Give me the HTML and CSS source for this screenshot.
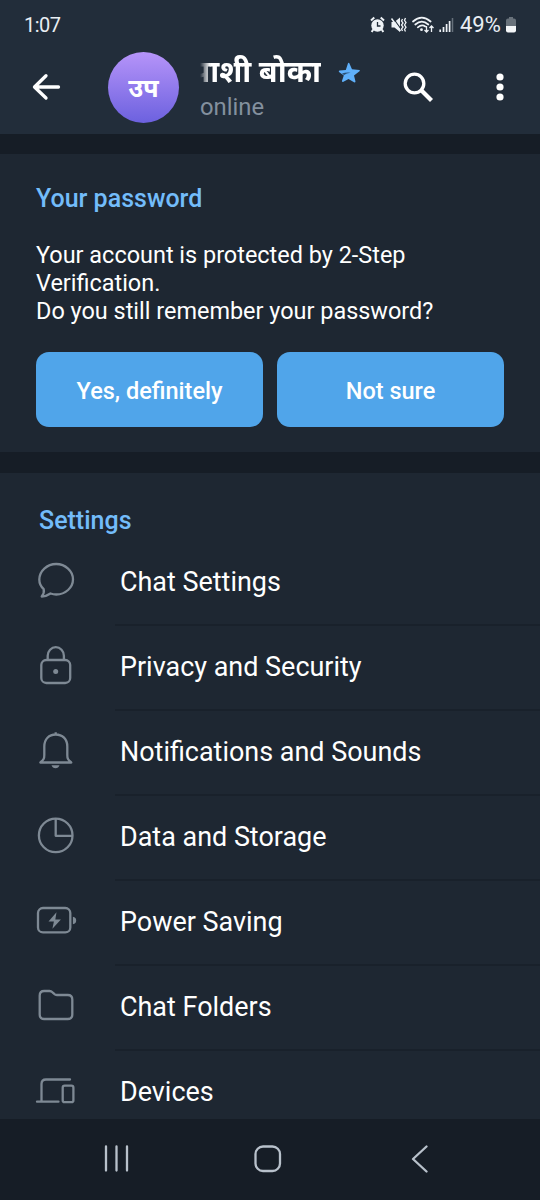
FILE: index.html
```html
<!DOCTYPE html>
<html lang="en">
<head>
<meta charset="utf-8">
<title>Settings</title>
<link rel="stylesheet" href="styles.css">
</head>
<body>
<div class="screen">
  <div class="status">
    <span class="clock">1:07</span>
    <svg class="status-icons" width="84" height="18" viewBox="370 16 84 18">
      <g fill="none" stroke="#eef2f6">
        <circle cx="377.500" cy="25.500" r="6.200" fill="#eef2f6" stroke="none"/>
        <path d="M371 20.5l3.3-3M384 20.5l-3.3-3M373.2 29.5l-1.500 2.500M381.8 29.5l1.500 2.500" stroke-width="2"/>
        <path d="M377.500 22v4h3" stroke="#222d3a" stroke-width="1.3"/>
        <path d="M391.5 22h3l5.5-4.5v14.500l-5.500-4.500h-3z" fill="#eef2f6" stroke="none"/>
        <path d="M392.700 17.500l9 12.500" stroke="#222d3a" stroke-width="1.200"/>
        <path d="M391.500 18.500l9 12.500" stroke-width="1.500"/>
        <path d="M402.500 19l-1 2 1.500 2-1.500 2 1.500 2-1.500 2 1 2M405.500 18l-1 2.300 1.500 2.300-1.500 2.300 1.500 2.300-1.500 2.300 1 2" stroke-width="1.300"/>
        <path d="M413 21.500q8.800-7.700 17.600 0M415.300 24.500q6.500-5.700 13 0M417.800 27.300q4-3.200 7.500-.8" stroke-width="1.700" stroke-linecap="round"/>
        <circle cx="421.500" cy="29.700" r="1.400" fill="#eef2f6" stroke="none"/>
        <path d="M426.500 26v6M424.500 30l2 2 2-2M431.500 32v-6M429.500 28l2-2 2 2" stroke-width="1.300"/>
        <path d="M440.200 32v-2.500M443.500 32v-5M446.600 32v-8M449.600 32v-11" stroke-width="1.700"/>
        <path d="M452.500 32v-14" stroke="#66707b" stroke-width="1.500"/>
      </g>
    </svg>
    <span class="percent">49%</span>
    <svg class="battery" width="10" height="16" viewBox="0 0 10 16"><path d="M3 0h4v1.500h1q2 0 2 2V9H0V3.500q0-2 2-2h1z" fill="#69727b"/><path d="M0 9h10v4.500q0 2-2 2H2q-2 0-2-2z" fill="#f4f6f8"/></svg>
  </div>
  <header class="bar">
    <svg class="back" width="30" height="28" viewBox="0 0 30 28" fill="none" stroke="#fff" stroke-width="3.300" stroke-linecap="round" stroke-linejoin="round"><path d="M27.500 14H3.500M15 2.700L3.500 14 15 25"/></svg>
    <div class="avatar">उप</div>
    <div class="who">
      <div class="title-line">
        <div class="name"><span>उपाशी बोका</span></div>
        <svg class="star" width="23" height="23" viewBox="0 0 23 23"><path d="M11.200 2l2.800 6.200 7.500.7q.8.600 0 1.300l-5.500 4.300 1.500 6q-.2 1.300-1.500.8L10.500 18l-5.500 3q-1.300 0-1-1.300l1.800-5.200L1 11q-.7-1 .5-1.400l6.300-.7L10 2.200q.6-.9 1.200-.2z" fill="#5fb0fa"/><path d="M4 12.500q4-1.300 8.500-.8-4 .4-6.500 2.300z" fill="#2b5074"/></svg>
      </div>
      <div class="online">online</div>
    </div>
    <svg class="search" width="32" height="32" viewBox="0 0 32 32" fill="none" stroke="#fff"><circle cx="12.500" cy="12.500" r="9.300" stroke-width="3.300"/><path d="M19.500 19.500L29.500 29.500" stroke-width="4.200"/></svg>
    <svg class="more" width="8" height="28" viewBox="0 0 8 28" fill="#fff"><circle cx="4" cy="4" r="3.600"/><circle cx="4" cy="14" r="3.600"/><circle cx="4" cy="24" r="3.600"/></svg>
  </header>
  <section class="card">
    <h2>Your password</h2>
    <p>Your account is protected by 2-Step Verification.<br>Do you still remember your password?</p>
    <div class="buttons"><button>Yes, definitely</button><button>Not sure</button></div>
  </section>
  <section class="settings">
    <h2>Settings</h2>
    <div class="row"><svg viewBox="0 0 44 44"><path d="M9.700 31.200C6.800 28.700 5.300 25.500 5.300 21.600 5.300 13 13 6 22.200 6S39 13 39 21.300 31.500 36.500 22.200 36.500c-2 0-4-.4-5.700-1q-4 2.800-8.800 3c2-2.500 2.700-4.600 2-7.300z"/></svg><span class="label">Chat Settings</span></div>
    <div class="row"><svg viewBox="0 0 44 44"><rect x="7.300" y="17" width="28.900" height="23" rx="5"/><path d="M13.700 17v-4.200a8 8.500 0 0 1 16.200 0V17"/><circle class="solid" cx="21.700" cy="28.500" r="2.500"/></svg><span class="label">Privacy and Security</span></div>
    <div class="row"><svg viewBox="0 0 44 44"><path d="M10.300 27V18.500C10.300 11 15 6.500 21.700 6.500S33.300 11 33.300 18.500V27c0 4 .7 4.500 4 7.500H6.300c3.300-3 4-3.500 4-7.500zM21.700 4.200v2"/><path class="solid" d="M17.500 37.200h8q-1 3-4 3t-4-3z"/></svg><span class="label">Notifications and Sounds</span></div>
    <div class="row"><svg viewBox="0 0 44 44"><circle cx="21.700" cy="22.400" r="16.800"/><path d="M21.700 5.600v17.200H38.500"/></svg><span class="label">Data and Storage</span></div>
    <div class="row"><svg viewBox="0 0 44 44"><rect x="4" y="10" width="32.300" height="24.400" rx="5"/><path class="solid" d="M22.500 14.200l-8 9.400h5.400l-1.500 7.200 8.500-9.300h-5.600zM38.900 18.700q3.300.6 3.300 3.700t-3.300 3.800z"/></svg><span class="label">Power Saving</span></div>
    <div class="row"><svg viewBox="0 0 44 44"><path d="M5.700 12.500q0-4.500 4.500-4.500h5.300q1.700 0 3 1.300l1.500 1.400q1.300 1.300 3 1.300h10.700q4.600 0 4.600 4.500v15q0 4.500-4.600 4.500H10.200q-4.500 0-4.500-4.500z"/></svg><span class="label">Chat Folders</span></div>
    <div class="row last"><svg viewBox="0 0 44 44"><path d="M3 33.700h21.500M7.500 33.500V16q0-4.500 4.500-4.500h24" stroke-linecap="round"/><rect x="28.700" y="17.700" width="10.700" height="16.500" rx="2"/></svg><span class="label">Devices</span></div>
  </section>
  <nav class="nav">
    <svg width="26" height="28" viewBox="0 0 26 28"><path d="M2 1.500v24M12.500 1.500v24M23 1.500v24"/></svg>
    <svg width="28" height="28" viewBox="0 0 28 28"><rect x="1.500" y="1.500" width="24.500" height="24.500" rx="7.500"/></svg>
    <svg width="18" height="28" viewBox="0 0 18 28"><path d="M15.500 1.500L2 14l13.500 12.500"/></svg>
  </nav>
</div>
</body>
</html>
```
FILE: styles.css
```css
* { box-sizing: border-box; }
body { margin: 0; background: #161d26; font-family: Roboto, "Noto Sans", sans-serif; color: #fff; }
.screen { width: 540px; height: 1200px; overflow: hidden; display: flex; flex-direction: column; }
.status { height: 50px; flex: none; background: #222d3a; display: flex; align-items: center; padding-left: 24px; color: #e9eef3; }
.clock { width: 346px; font-size: 20px; line-height: 24px; letter-spacing: -0.5px; }
.percent { width: 46px; margin-left: 6px; font-size: 22px; line-height: 24px; white-space: nowrap; }
.bar { height: 84px; flex: none; background: #222d3a; display: flex; align-items: flex-start; }
.back { margin: 23px 0 0 31px; }
.avatar { width: 71px; height: 71px; margin: 2px 0 0 47px; padding-bottom: 2px; border-radius: 50%; background: linear-gradient(#b694f9, #6c61df); display: flex; align-items: center; justify-content: center; font-size: 25.5px; font-weight: 700; }
.who { width: 202px; margin-left: 21px; }
.title-line { height: 44px; display: flex; align-items: center; }
.name { width: 121px; overflow: hidden; font-size: 30.5px; font-weight: 700; line-height: 44px; white-space: nowrap; display: flex; justify-content: flex-end; -webkit-mask-image: linear-gradient(90deg, transparent, #000 10px); mask-image: linear-gradient(90deg, transparent, #000 10px); }
.star { margin-left: 17px; }
.online { color: #83909e; font-size: 23.8px; line-height: 27px; }
.search { margin-top: 21px; }
.more { margin: 23px 0 0 61.5px; }
.card { height: 298px; flex: none; margin-top: 20px; padding: 30px 36px 0; background: #1e2732; }
h2 { margin: 0; color: #73bcfa; font-size: 25px; line-height: 30px; font-weight: 500; }
.card p { width: 420px; margin: 27px 0 0; font-size: 23.45px; line-height: 28px; }
.buttons { display: flex; gap: 14px; margin-top: 27px; }
button { flex: 1; height: 75px; padding: 2px 0 0; border: 0; border-radius: 13px; background: #50a5ea; color: #fff; font: 500 23.5px Roboto, sans-serif; }
.settings { height: 646px; flex: none; margin-top: 21px; padding-top: 33px; overflow: hidden; background: #1e2732; }
.settings h2 { margin-left: 39px; height: 35px; }
.row { height: 85px; padding-left: 34px; display: flex; align-items: center; }
.row svg { width: 44px; height: 44px; margin-top: -8px; flex: none; fill: none; stroke: #7e8994; stroke-width: 2.3; stroke-linejoin: round; }
.row .solid { fill: #7e8994; stroke: none; }
.label { flex: 1; height: 85px; margin-left: 37px; padding-left: 5px; border-bottom: 2px solid #19212b; font-size: 26.95px; line-height: 83px; }
.last .label { border: 0; }
.nav { height: 81px; flex: none; display: flex; justify-content: space-between; padding: 26px 111px 0 104px; }
.nav svg { fill: none; stroke: #b8c1cb; stroke-width: 2.3; stroke-linecap: round; stroke-linejoin: round; }
.nav svg:nth-child(2) { margin-left: -5px; }
```
